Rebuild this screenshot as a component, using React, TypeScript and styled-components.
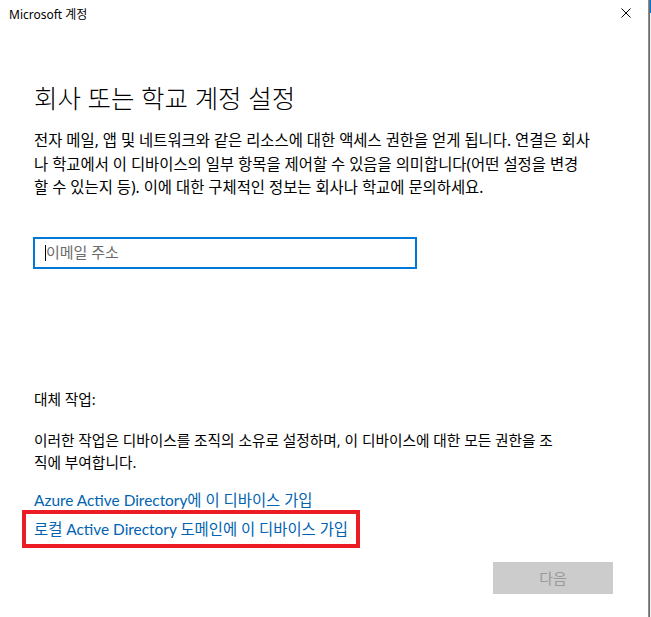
import React from "react";
import styled, { createGlobalStyle } from "styled-components";

const GlobalStyle = createGlobalStyle`
  html, body {
    margin: 0;
    padding: 0;
    background: #fff;
  }
  body {
    font-family: "Segoe UI", "Noto Sans", "Noto Sans CJK KR", sans-serif;
    color: #000;
  }
`;

const Screen = styled.div`
  display: flex;
  width: 651px;
  height: 617px;
  overflow: hidden;
`;

const Window = styled.div`
  width: 648px;
  height: 617px;
  border-right: 1px solid #8c8c8c;
  display: flex;
  flex-direction: column;
  background: #fff;
`;

const BehindStrip = styled.div`
  flex: 1;
  background: linear-gradient(#0078d7 0 13px, #f0f0f0 13px);
  border-left: 1px solid #6e6e6e;
`;

const TitleBar = styled.div`
  height: 28px;
  display: flex;
  align-items: center;
  justify-content: space-between;
  padding: 0 17px 0 9px;
  font-size: 12px;
`;

const CloseButton = styled.svg`
  width: 10px;
  height: 10px;
  margin-top: -2px;
`;

const Content = styled.div`
  padding: 0 30px 0 34px;
  display: flex;
  flex-direction: column;
`;

const Heading = styled.h1`
  margin: 55px 0 0;
  font-size: 25.5px;
  font-weight: 300;
  line-height: 30px;
`;

const Paragraph = styled.p`
  margin: 16px 0 0;
  font-size: 15.4px;
  line-height: 23.5px;
  white-space: nowrap;
`;

const Field = styled.div`
  position: relative;
  margin-top: 37px;
  margin-left: -1px;
  width: 384px;
`;

const EmailInput = styled.input`
  box-sizing: border-box;
  width: 100%;
  height: 32px;
  border: 2px solid #0078d7;
  padding: 0 0 1px 11px;
  font: inherit;
  font-size: 15px;
  outline: none;

  &::placeholder {
    color: #6b6b6b;
  }
`;

const Caret = styled.span`
  position: absolute;
  left: 12px;
  top: 8px;
  width: 1px;
  height: 16px;
  background: #000;
`;

const Label = styled.div`
  margin-top: 119px;
  font-size: 14.7px;
  line-height: 22px;
`;

const Note = styled.p`
  margin: 19px 0 0;
  font-size: 14.7px;
  line-height: 22px;
  white-space: nowrap;
`;

const Link = styled.a`
  color: #0063b1;
  text-decoration: none;
  font-family: "Segoe UI", Lato, "Noto Sans CJK KR", sans-serif;
  font-size: 15.4px;
  line-height: 22px;
  cursor: pointer;
`;

const FirstLink = styled(Link)`
  margin-top: 16px;
`;

const Highlight = styled.div`
  align-self: flex-start;
  margin: -1px 0 0 -12px;
  padding: 0 8px;
  border: 4px solid #ec1c24;
  line-height: 30px;
`;

const Footer = styled.div`
  display: flex;
  justify-content: flex-end;
  padding-right: 35px;
  margin-top: 14px;
`;

const NextButton = styled.button`
  width: 120px;
  height: 32px;
  border: none;
  background: #cccccc;
  color: #9a9a9a;
  font: inherit;
  font-size: 15px;
`;

export default function App() {
  return (
    <>
      <GlobalStyle />
      <Screen>
        <Window>
          <TitleBar>
            <span>Microsoft 계정</span>
            <CloseButton viewBox="0 0 10 10">
              <path d="M0.5 0.5 L9.5 9.5 M9.5 0.5 L0.5 9.5" stroke="#000" strokeWidth="1" />
            </CloseButton>
          </TitleBar>
          <Content>
            <Heading>회사 또는 학교 계정 설정</Heading>
            <Paragraph>
              전자 메일, 앱 및 네트워크와 같은 리소스에 대한 액세스 권한을 얻게 됩니다. 연결은 회사
              <br />
              나 학교에서 이 디바이스의 일부 항목을 제어할 수 있음을 의미합니다(어떤 설정을 변경
              <br />
              할 수 있는지 등). 이에 대한 구체적인 정보는 회사나 학교에 문의하세요.
            </Paragraph>
            <Field>
              <EmailInput placeholder="이메일 주소" />
              <Caret />
            </Field>
            <Label>대체 작업:</Label>
            <Note>
              이러한 작업은 디바이스를 조직의 소유로 설정하며, 이 디바이스에 대한 모든 권한을 조
              <br />
              직에 부여합니다.
            </Note>
            <FirstLink>Azure Active Directory에 이 디바이스 가입</FirstLink>
            <Highlight>
              <Link>로컬 Active Directory 도메인에 이 디바이스 가입</Link>
            </Highlight>
          </Content>
          <Footer>
            <NextButton disabled>다음</NextButton>
          </Footer>
        </Window>
        <BehindStrip />
      </Screen>
    </>
  );
}
